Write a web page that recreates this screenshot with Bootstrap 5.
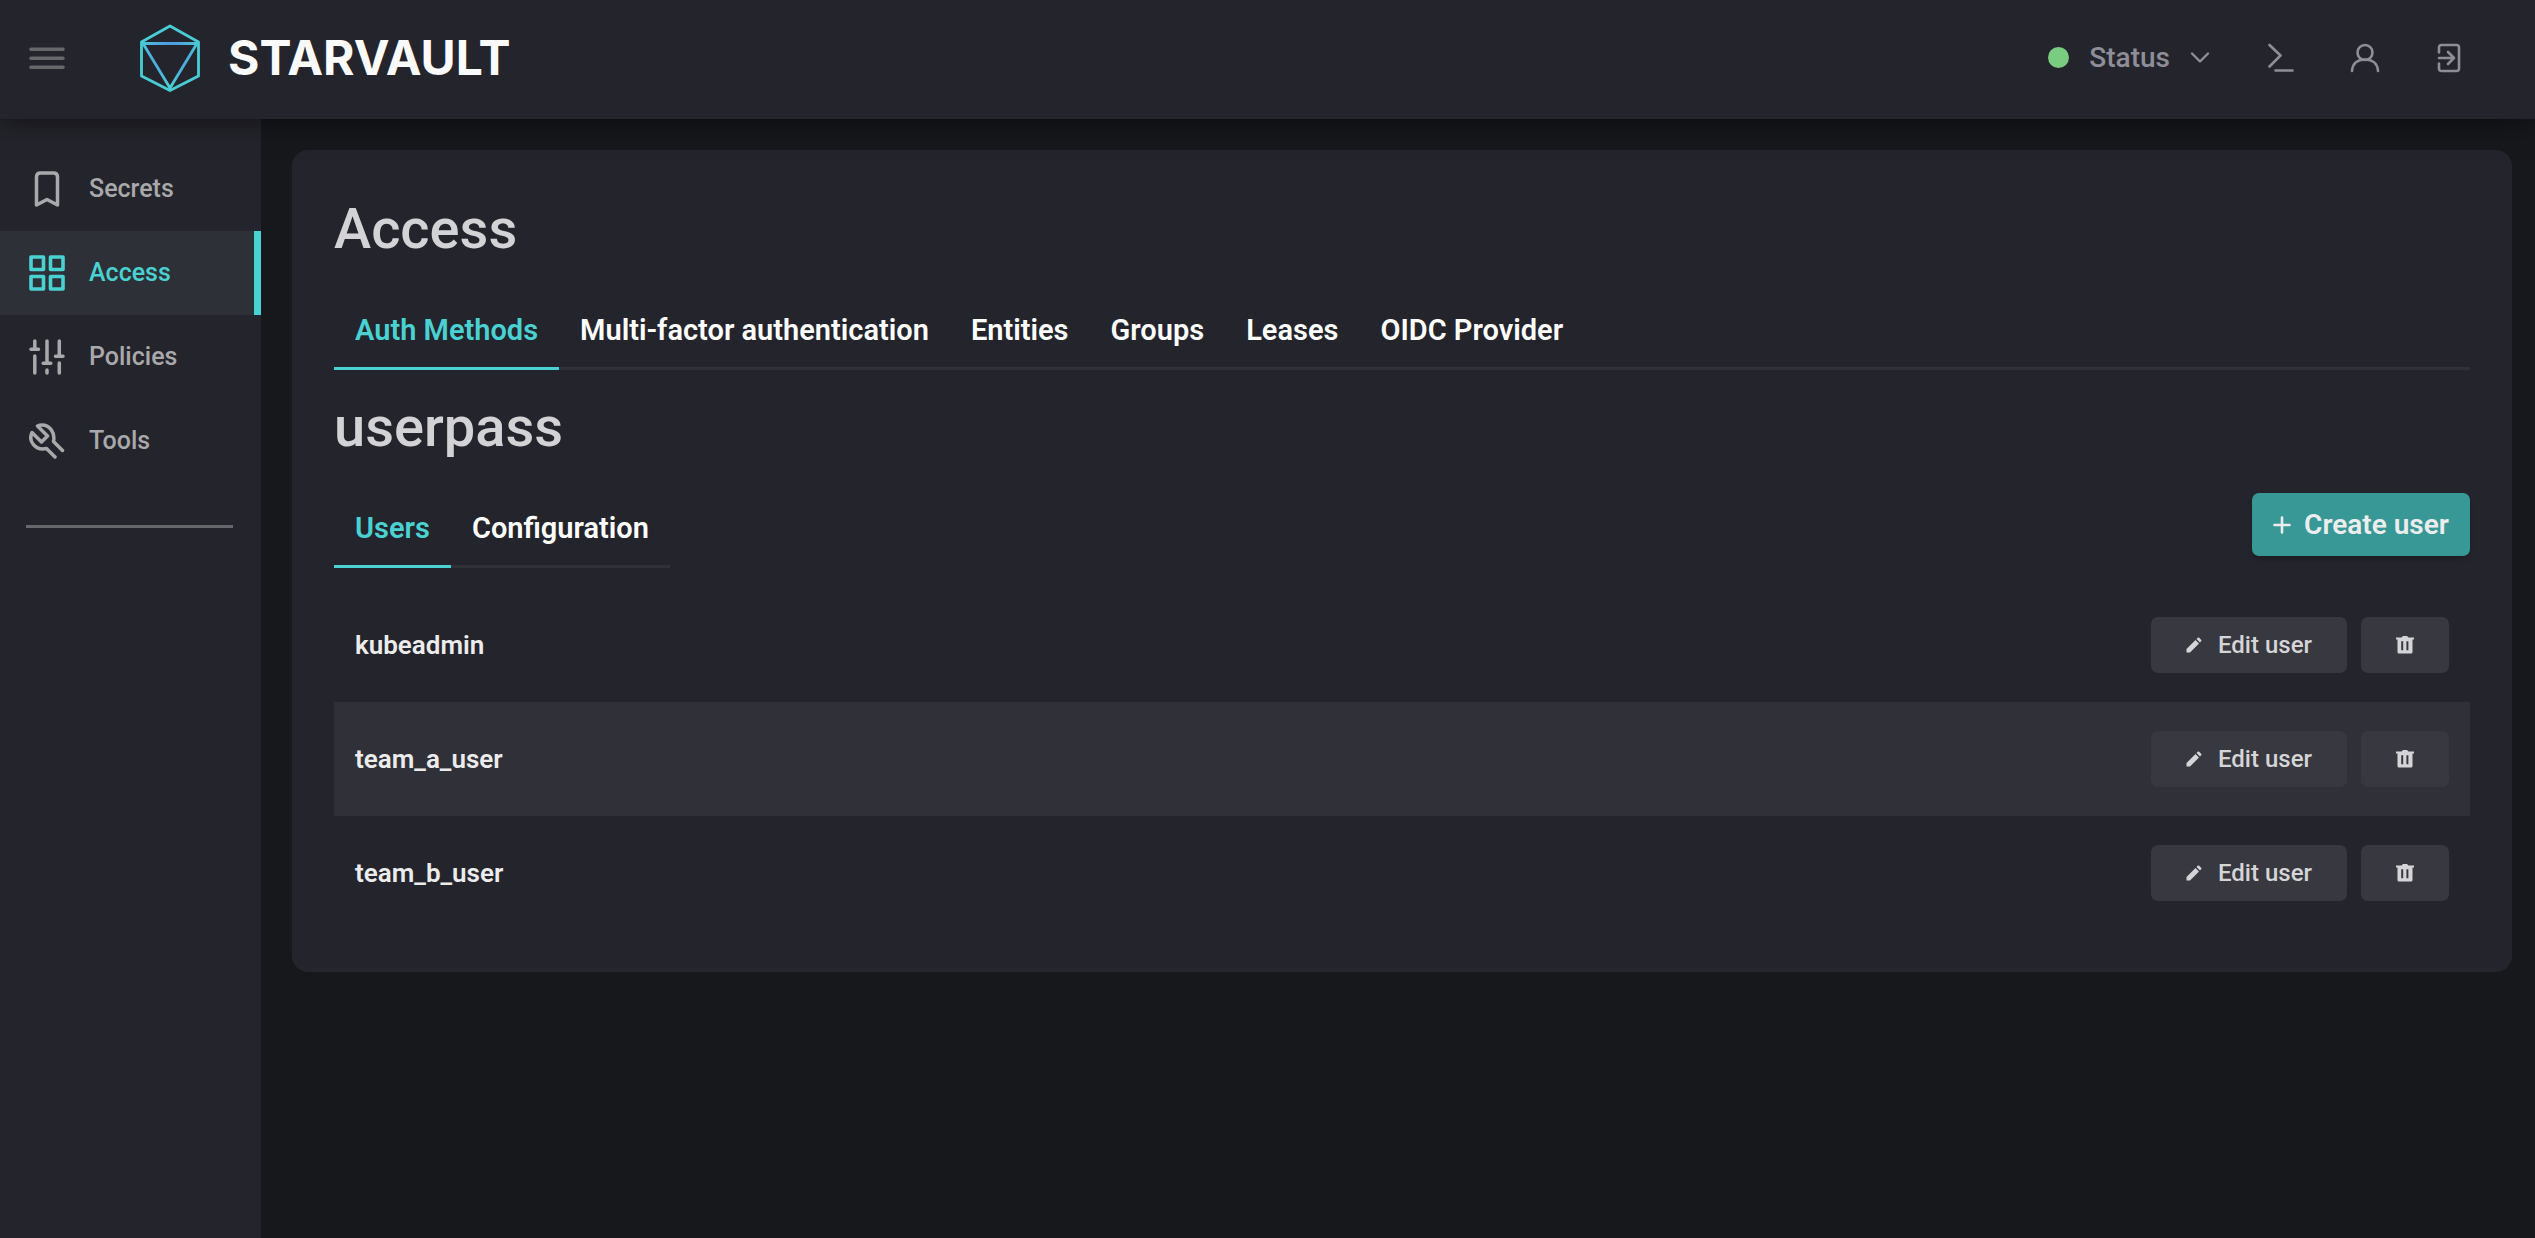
<!DOCTYPE html>
<html lang="en">
<head>
<meta charset="utf-8">
<meta name="viewport" content="width=device-width, initial-scale=1">
<title>StarVault</title>
<link href="https://cdn.jsdelivr.net/npm/bootstrap@5.3.0/dist/css/bootstrap.min.css" rel="stylesheet">
<style>
  :root { --sv-accent: #4ad2d2; --sv-panel: #24242c; --sv-ground: #17181c; --sv-raised: #303038; --sv-chip: #383840; --sv-muted: #8f8e98; }
  body { background: var(--sv-ground); color: #fff; font-family: "Roboto", "Liberation Sans", sans-serif; font-size: 24px; line-height: 36px; }
  svg { display: block; flex: none; fill: none; stroke: currentColor; stroke-linecap: round; stroke-linejoin: round; }
  .topbar { height: 119px; padding-bottom: 4px; background: var(--sv-panel); box-shadow: 0 0 28px rgba(0, 0, 0, .6); z-index: 2; }
  .burger { width: 94px; color: #67676c; }
  .brand { gap: 28px; margin-left: 46px; color: #fafafa; }
  .brand-name { font: 700 48px/60px "Inter", sans-serif; }
  .tools { color: var(--sv-muted); padding-right: 44px; }
  .tools .tool { width: 84px; height: 84px; color: inherit; }
  .status { gap: 20px; color: inherit; font-size: 28px; font-weight: 500; margin-right: 29px; }
  .status-dot { width: 21px; height: 21px; background: #7acd80; }
  .sidebar { width: 261px; background: var(--sv-panel); padding-top: 28px; }
  .sidebar .nav-link { height: 84px; padding: 0 0 0 29px; gap: 24px; color: #a9a9ab; font-size: 25px; font-weight: 500; border-right: 7px solid transparent; border-radius: 0; }
  .sidebar .nav-link.active { color: var(--sv-accent); background: #2d3137; border-color: var(--sv-accent); }
  .side-rule { height: 3px; background: #68686c; margin: 42px 28px 0 26px; }
  .page { padding: 31px 23px 31px 31px; }
  .panel { background: var(--sv-panel); border-radius: 16px; padding: 44px 42px 42px; }
  .title { font-size: 56px; line-height: 70px; font-weight: 500; color: #d3d3d5; margin: 0 0 29px; }
  .title-sub { margin-top: 22px; }
  .tabs { border-bottom: 3px solid var(--sv-raised); }
  .tabs .nav-link { padding: 16px 21px; margin-bottom: -3px; font-size: 29px; line-height: 42px; font-weight: 600; color: #fff; border-bottom: 3px solid transparent; border-radius: 0; }
  .tabs .nav-link.active { color: var(--sv-accent); border-color: var(--sv-accent); }
  .btn-create { height: 63px; width: 218px; margin-bottom: 10px; gap: 13px; background: #379896; color: #ededed; font-size: 28px; font-weight: 600; border: 0; border-radius: 7px; padding: 0; box-shadow: 0 4px 4px rgba(0, 0, 0, .15); }
  .users { margin-top: 20px; }
  .user-row { height: 114px; padding: 0 21px; gap: 14px; font-weight: 600; font-size: 26px; color: #ececec; }
  .user-row.hovered { background: var(--sv-raised); }
  .btn-chip { height: 56px; background: var(--sv-chip); color: #d5d5d7; border: 0; border-radius: 7px; font-size: 24px; font-weight: 500; padding: 0; }
  .chip-edit { width: 196px; gap: 16px; }
  .chip-del { width: 88px; }
</style>
</head>
<body class="d-flex flex-column min-vh-100">
<header class="topbar d-flex align-items-center position-relative">
  <button class="burger btn p-0 border-0 d-flex justify-content-center" type="button" aria-label="Toggle menu">
    <svg width="36" height="24" viewBox="0 0 36 24" stroke-width="3.6"><path d="M2 3.200H34M2 12.200H34M2 21.200H34"/></svg>
  </button>
  <a class="brand d-flex align-items-center text-decoration-none" href="#">
    <svg width="60" height="68" viewBox="0 0 60 68" stroke-width="2.800">
      <defs><radialGradient id="sv" gradientUnits="userSpaceOnUse" cx="30" cy="30" r="34"><stop offset=".2" stop-color="#4f95e4"/><stop offset="1" stop-color="#4ad2d2"/></radialGradient></defs>
      <path d="M30 2L58.500 18V52L30 66.500L1.500 52V18Z" stroke="#4accd4"/>
      <path d="M3 19.500H57L30 64Z" stroke="url(#sv)"/>
    </svg>
    <span class="brand-name">STARVAULT</span>
  </a>
  <div class="tools d-flex align-items-center ms-auto">
    <button class="status btn p-0 border-0 d-flex align-items-center" type="button">
      <span class="status-dot rounded-circle"></span>Status
      <svg width="20" height="12" viewBox="0 0 20 12" stroke-width="2.400"><path d="M2 1.500L10 9.500L18 1.500"/></svg>
    </button>
    <button class="tool btn p-0 border-0 d-flex align-items-center justify-content-center" type="button" aria-label="Console">
      <svg width="26" height="30" viewBox="0 0 26 30" stroke-width="2.600"><path d="M1.500 2L12.500 12.500L1.500 23.500M7.500 27.500H24.500"/></svg>
    </button>
    <button class="tool btn p-0 border-0 d-flex align-items-center justify-content-center" type="button" aria-label="User menu">
      <svg width="30" height="30" viewBox="0 0 30 30" stroke-width="2.600"><circle cx="15" cy="9.500" r="7.500"/><path d="M2 28C2.500 20 8 16.500 15 16.500S27.500 20 28 28"/></svg>
    </button>
    <button class="tool btn p-0 border-0 d-flex align-items-center justify-content-center" type="button" aria-label="Log out">
      <svg width="24" height="30" viewBox="0 0 24 30" stroke-width="2.600"><path d="M2 9.500V4.500Q2 2 4.500 2H19.500Q22 2 22 4.500V25.500Q22 28 19.500 28H4.500Q2 28 2 25.500V20.500M2 15H17M11 9L17 15L11 21"/></svg>
    </button>
  </div>
</header>
<div class="d-flex flex-grow-1">
  <aside class="sidebar flex-shrink-0">
    <nav class="nav flex-column">
      <a class="nav-link d-flex align-items-center" href="#"><svg width="36" height="36" viewBox="0 0 36 36" stroke-width="3.500"><path d="M7.500 34V6Q7.500 2 11.500 2H24.500Q28.500 2 28.500 6V34L18 28.500Z"/></svg>Secrets</a>
      <a class="nav-link active d-flex align-items-center" href="#" aria-current="page"><svg width="36" height="36" viewBox="0 0 36 36" stroke-width="3.600"><path d="M2 2H14.500V14.500H2ZM21.500 2H34V14.500H21.500ZM2 21.500H14.500V34H2ZM21.500 21.500H34V34H21.500Z"/></svg>Access</a>
      <a class="nav-link d-flex align-items-center" href="#"><svg width="36" height="36" viewBox="0 0 36 36" stroke-width="3.500"><path d="M5.800 2V10M2 10.300H9.500M5.800 17V34M18 2V24M14.200 24.300H21.800M18 31V34M30.300 2V17M26.500 17.300H34M30.300 24V34"/></svg>Policies</a>
      <a class="nav-link d-flex align-items-center" href="#"><svg width="36" height="36" viewBox="0 0 36 36" stroke-width="3.500"><path d="M33.500 27.500L24.500 18.500C26.500 9 20 2 13 2Q10.500 2 8.500 3L18.500 13L12.500 19L3 9.500C-1 18 6 28 17.500 25.500L26 34"/></svg>Tools</a>
    </nav>
    <div class="side-rule"></div>
  </aside>
  <main class="page flex-grow-1">
    <section class="panel">
      <h1 class="title">Access</h1>
      <ul class="tabs nav">
        <li class="nav-item"><a class="nav-link active" href="#">Auth Methods</a></li>
        <li class="nav-item"><a class="nav-link" href="#">Multi-factor authentication</a></li>
        <li class="nav-item"><a class="nav-link" href="#">Entities</a></li>
        <li class="nav-item"><a class="nav-link" href="#">Groups</a></li>
        <li class="nav-item"><a class="nav-link" href="#">Leases</a></li>
        <li class="nav-item"><a class="nav-link" href="#">OIDC Provider</a></li>
      </ul>
      <h2 class="title title-sub">userpass</h2>
      <div class="d-flex align-items-center justify-content-between">
        <ul class="tabs nav">
          <li class="nav-item"><a class="nav-link active" href="#">Users</a></li>
          <li class="nav-item"><a class="nav-link" href="#">Configuration</a></li>
        </ul>
        <button class="btn-create btn d-flex align-items-center justify-content-center" type="button"><svg width="18" height="18" viewBox="0 0 18 18" stroke-width="2.600"><path d="M9 1.500V16.500M1.500 9H16.500"/></svg>Create user</button>
      </div>
      <div class="users">
        <div class="user-row d-flex align-items-center"><span class="me-auto">kubeadmin</span>
          <button class="btn-chip chip-edit btn d-flex align-items-center justify-content-center" type="button"><svg width="16" height="16" viewBox="0 0 16 16"><path fill="currentColor" stroke="none" d="M.5 12L9.500 3L13 6.500L4 15.500H.5ZM10.500 2L12 .6Q12.600 .2 13.200 .8L15.300 2.900Q15.800 3.500 15.300 4.100L14 5.500Z"/></svg>Edit user</button>
          <button class="btn-chip chip-del btn d-flex align-items-center justify-content-center" type="button" aria-label="Delete kubeadmin"><svg width="18" height="18" viewBox="0 0 18 18"><path fill="currentColor" fill-rule="evenodd" stroke="none" d="M0 1.500H5.500L7 0H11L12.500 1.500H18V3.500H16.500V16Q16.500 17.500 15 17.500H3Q1.500 17.500 1.500 16V3.500H0ZM5.200 5.200V14.200H7.200V5.200ZM10.400 5.200V14.200H12.400V5.200Z"/></svg></button></div>
        <div class="user-row hovered d-flex align-items-center"><span class="me-auto">team_a_user</span>
          <button class="btn-chip chip-edit btn d-flex align-items-center justify-content-center" type="button"><svg width="16" height="16" viewBox="0 0 16 16"><path fill="currentColor" stroke="none" d="M.5 12L9.500 3L13 6.500L4 15.500H.5ZM10.500 2L12 .6Q12.600 .2 13.200 .8L15.300 2.900Q15.800 3.500 15.300 4.100L14 5.500Z"/></svg>Edit user</button>
          <button class="btn-chip chip-del btn d-flex align-items-center justify-content-center" type="button" aria-label="Delete team_a_user"><svg width="18" height="18" viewBox="0 0 18 18"><path fill="currentColor" fill-rule="evenodd" stroke="none" d="M0 1.500H5.500L7 0H11L12.500 1.500H18V3.500H16.500V16Q16.500 17.500 15 17.500H3Q1.500 17.500 1.500 16V3.500H0ZM5.200 5.200V14.200H7.200V5.200ZM10.400 5.200V14.200H12.400V5.200Z"/></svg></button></div>
        <div class="user-row d-flex align-items-center"><span class="me-auto">team_b_user</span>
          <button class="btn-chip chip-edit btn d-flex align-items-center justify-content-center" type="button"><svg width="16" height="16" viewBox="0 0 16 16"><path fill="currentColor" stroke="none" d="M.5 12L9.500 3L13 6.500L4 15.500H.5ZM10.500 2L12 .6Q12.600 .2 13.200 .8L15.300 2.900Q15.800 3.500 15.300 4.100L14 5.500Z"/></svg>Edit user</button>
          <button class="btn-chip chip-del btn d-flex align-items-center justify-content-center" type="button" aria-label="Delete team_b_user"><svg width="18" height="18" viewBox="0 0 18 18"><path fill="currentColor" fill-rule="evenodd" stroke="none" d="M0 1.500H5.500L7 0H11L12.500 1.500H18V3.500H16.500V16Q16.500 17.500 15 17.500H3Q1.500 17.500 1.500 16V3.500H0ZM5.200 5.200V14.200H7.200V5.200ZM10.400 5.200V14.200H12.400V5.200Z"/></svg></button></div>
      </div>
    </section>
  </main>
</div>
<script src="https://cdn.jsdelivr.net/npm/bootstrap@5.3.0/dist/js/bootstrap.bundle.min.js"></script>
</body>
</html>
